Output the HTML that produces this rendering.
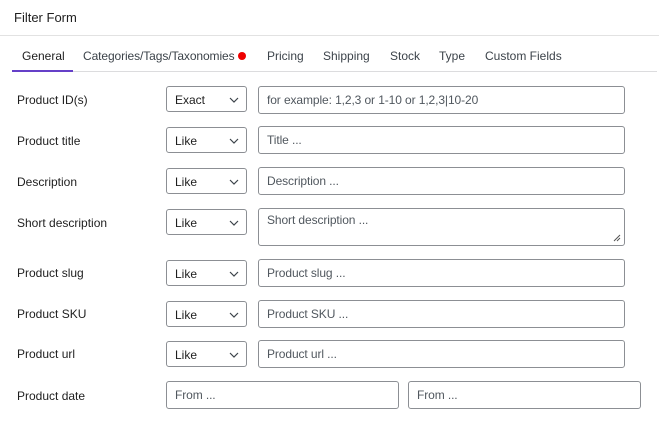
<!DOCTYPE html>
<html><head><style>
body{margin:0;width:659px;height:437px;background:#fff;font-family:"Liberation Sans",sans-serif;color:#1e1e1e;position:relative;overflow:hidden}
.a{position:absolute}
.t{left:14px;top:10px;font-size:13px}
.hr{left:0;top:35px;width:659px;height:1px;background:#e2e2e2}
.tabs{left:0;top:49px;font-size:12px;color:#3c434a}
.tab{position:absolute;top:0;white-space:nowrap}
.tl{left:12px;top:71px;width:645px;height:1px;background:#dcdcde}
.ul{left:12px;top:70px;width:61px;height:2px;background:#6540c8}
.lab{left:17px;font-size:12px;color:#1e1e1e}
.sel{left:166px;width:81px;height:26px;border:1px solid #8c8f94;border-radius:3px;box-sizing:border-box;font-size:12px;padding:6px 0 0 8px}
.sel svg{position:absolute;right:7px;top:10px}
.in{left:258px;width:367px;height:28px;border:1px solid #8c8f94;border-radius:3px;box-sizing:border-box;font-size:12px;padding:6px 0 0 8px;color:#50575e;letter-spacing:-0.1px}
</style></head><body>
<div class="a t">Filter Form</div>
<div class="a hr"></div>
<div class="a tabs">
<span class="tab" style="left:22px;color:#1e1e1e">General</span>
<span class="tab" style="left:83px;letter-spacing:-0.1px">Categories/Tags/Taxonomies <span style="display:inline-block;width:8px;height:8px;border-radius:50%;background:#e00;vertical-align:0px"></span></span>
<span class="tab" style="left:267px">Pricing</span>
<span class="tab" style="left:323px">Shipping</span>
<span class="tab" style="left:390px">Stock</span>
<span class="tab" style="left:439px">Type</span>
<span class="tab" style="left:485px">Custom Fields</span>
</div>
<div class="a tl"></div><div class="a ul"></div>

<div class="a lab" style="top:93px">Product ID(s)</div>
<div class="a sel" style="top:86px">Exact<svg width="10" height="6"><path d="M1 1l4 4 4-4" stroke="#3c434a" fill="none" stroke-width="1.2"/></svg></div>
<div class="a in" style="top:86px">for example: 1,2,3 or 1-10 or 1,2,3|10-20</div>

<div class="a lab" style="top:134px">Product title</div>
<div class="a sel" style="top:127px">Like<svg width="10" height="6"><path d="M1 1l4 4 4-4" stroke="#3c434a" fill="none" stroke-width="1.2"/></svg></div>
<div class="a in" style="top:126px">Title ...</div>

<div class="a lab" style="top:175px">Description</div>
<div class="a sel" style="top:168px">Like<svg width="10" height="6"><path d="M1 1l4 4 4-4" stroke="#3c434a" fill="none" stroke-width="1.2"/></svg></div>
<div class="a in" style="top:167px">Description ...</div>

<div class="a lab" style="top:216px">Short description</div>
<div class="a sel" style="top:209px">Like<svg width="10" height="6"><path d="M1 1l4 4 4-4" stroke="#3c434a" fill="none" stroke-width="1.2"/></svg></div>
<div class="a in" style="top:208px;height:38px;padding-top:4px">Short description ...<svg style="position:absolute;right:3px;bottom:3px" width="8" height="8"><path d="M7 1L1 7M7 4L4 7" stroke="#555" stroke-width="1"/></svg></div>

<div class="a lab" style="top:266px">Product slug</div>
<div class="a sel" style="top:260px">Like<svg width="10" height="6"><path d="M1 1l4 4 4-4" stroke="#3c434a" fill="none" stroke-width="1.2"/></svg></div>
<div class="a in" style="top:259px">Product slug ...</div>

<div class="a lab" style="top:307px">Product SKU</div>
<div class="a sel" style="top:301px">Like<svg width="10" height="6"><path d="M1 1l4 4 4-4" stroke="#3c434a" fill="none" stroke-width="1.2"/></svg></div>
<div class="a in" style="top:300px">Product SKU ...</div>

<div class="a lab" style="top:347px">Product url</div>
<div class="a sel" style="top:341px">Like<svg width="10" height="6"><path d="M1 1l4 4 4-4" stroke="#3c434a" fill="none" stroke-width="1.2"/></svg></div>
<div class="a in" style="top:340px">Product url ...</div>

<div class="a lab" style="top:389px">Product date</div>
<div class="a in" style="top:381px;left:166px;width:233px">From ...</div>
<div class="a in" style="top:381px;left:408px;width:233px">From ...</div>
</body></html>
